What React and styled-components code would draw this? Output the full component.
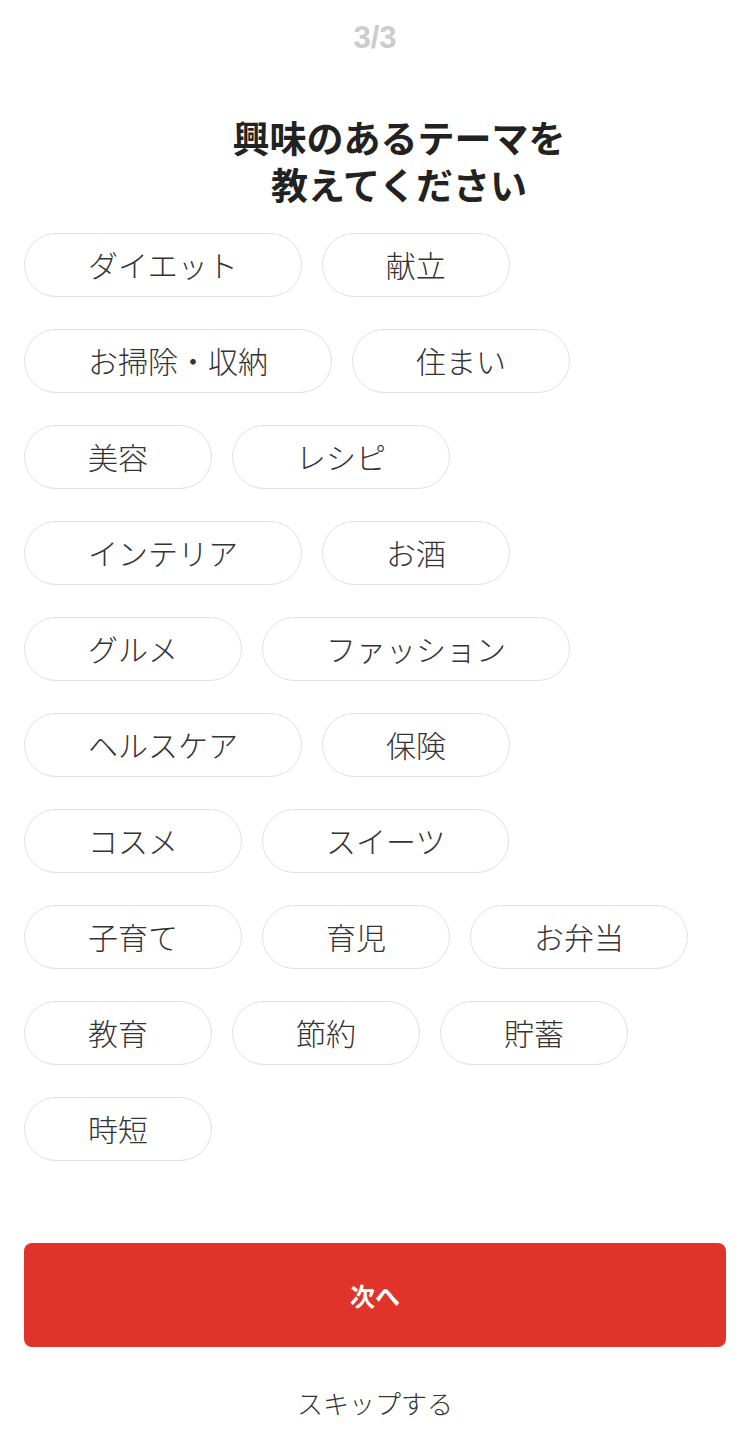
import React, { useState } from 'react'
import styled, { createGlobalStyle } from 'styled-components'

const rows = [
  ['ダイエット', '献立'],
  ['お掃除・収納', '住まい'],
  ['美容', 'レシピ'],
  ['インテリア', 'お酒'],
  ['グルメ', 'ファッション'],
  ['ヘルスケア', '保険'],
  ['コスメ', 'スイーツ'],
  ['子育て', '育児', 'お弁当'],
  ['教育', '節約', '貯蓄'],
  ['時短'],
]

function App() {
  const [picked, setPicked] = useState([])

  const toggle = (name) => {
    setPicked((p) => (p.includes(name) ? p.filter((x) => x !== name) : [...p, name]))
  }

  return (
    <Container>
      <GlobalStyle />
      <Step>3/3</Step>

      <Title>
        <TitleLine>興味のあるテーマを</TitleLine>
        <TitleLine>教えてください</TitleLine>
      </Title>

      <ChipList>
        {rows.map((row, i) => (
          <ChipRow key={i}>
            {row.map((name) => (
              <Chip key={name} $active={picked.includes(name)} onClick={() => toggle(name)}>
                {name}
              </Chip>
            ))}
          </ChipRow>
        ))}
      </ChipList>

      <Footer>
        <NextButton>次へ</NextButton>
        <Skip>スキップする</Skip>
      </Footer>
    </Container>
  )
}

export default App

const GlobalStyle = createGlobalStyle`
  body {
    margin: 0;
    background: #fff;
    font-family: "Noto Sans CJK JP", "Noto Sans", sans-serif;
  }
`

const Container = styled.div`
  width: 750px;
  min-height: 1432px;
  box-sizing: border-box;
  padding: 0 24px;
  display: flex;
  flex-direction: column;
`

const Step = styled.div`
  padding-top: 18px;
  text-align: center;
  font-family: "Liberation Sans", Arial, sans-serif;
  font-size: 31px;
  line-height: 40px;
  font-weight: 700;
  color: #cccccc;
`

const Title = styled.h1`
  margin: 56px 0 0;
  padding-left: 48px;
  display: flex;
  flex-direction: column;
  align-items: center;
  font-size: 37px;
  font-weight: 700;
  color: #222;
`

const TitleLine = styled.span`
  display: block;
  height: 47px;
  line-height: 47px;
  overflow: visible;
`

const ChipList = styled.div`
  margin-top: 25px;
  display: flex;
  flex-direction: column;
  gap: 32px;
`

const ChipRow = styled.div`
  display: flex;
  gap: 20px;
`

const Chip = styled.button`
  height: 64px;
  padding: 0 63px 3px;
  border: 1px solid ${(p) => (p.$active ? '#e0342b' : '#e0e0e0')};
  border-radius: 32px;
  background: #fff;
  font-family: inherit;
  font-size: 30px;
  font-weight: 300;
  line-height: 58px;
  color: ${(p) => (p.$active ? '#e0342b' : '#333')};
  white-space: nowrap;
  cursor: pointer;
`

const Footer = styled.div`
  margin-top: 82px;
  display: flex;
  flex-direction: column;
  align-items: center;
`

const NextButton = styled.button`
  width: 100%;
  height: 104px;
  border: none;
  border-radius: 8px;
  background: #e0342b;
  color: #fff;
  font-family: inherit;
  font-size: 25px;
  font-weight: 700;
`

const Skip = styled.div`
  margin-top: 38px;
  font-size: 26px;
  font-weight: 300;
  line-height: 36px;
  color: #333;
`
